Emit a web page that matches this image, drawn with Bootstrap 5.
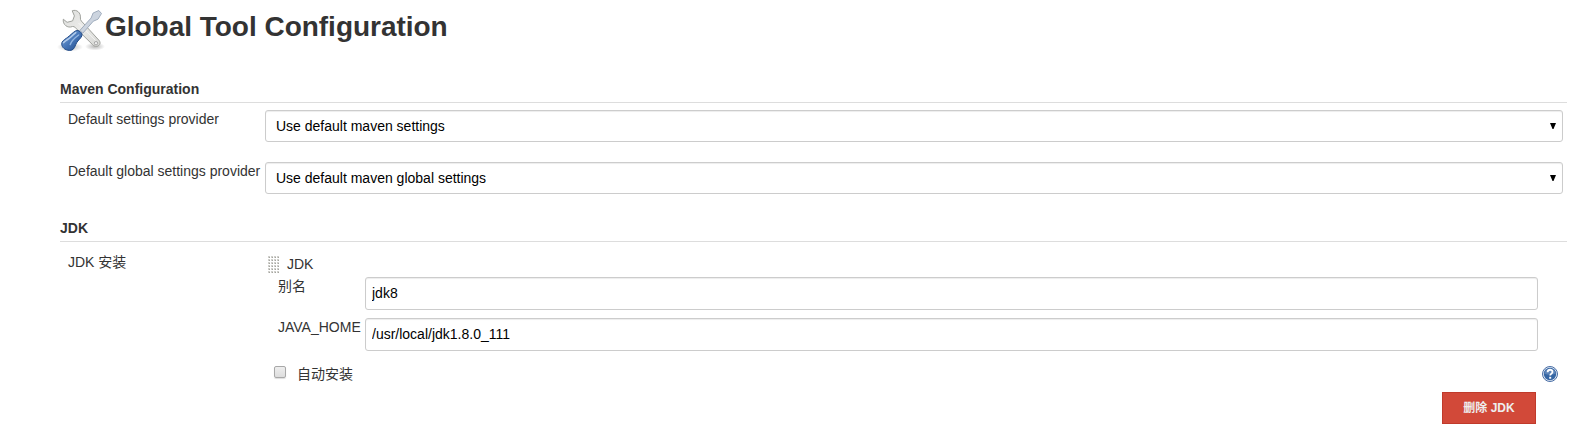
<!DOCTYPE html>
<html lang="zh-CN">
<head>
<meta charset="utf-8">
<meta name="viewport" content="width=device-width, initial-scale=1">
<title>Global Tool Configuration</title>
<link href="https://cdn.jsdelivr.net/npm/bootstrap@5.3.0/dist/css/bootstrap.min.css" rel="stylesheet">
<style>
body{font-family:"Liberation Sans","Noto Sans CJK SC",sans-serif;font-size:14px;line-height:20px;color:#333;background:#fff;overflow:hidden}
.page{padding:6px 7px 0 57px}
.title-row{height:73px}
h1{font-size:28px;line-height:42px;font-weight:700;color:#333;letter-spacing:-.02px}
.section-head{font-size:14px;line-height:20px;font-weight:700;height:24px;margin:0 0 0 3px;border-bottom:1px solid #ddd}
.field-row{margin-left:3px;padding:7px 4px 0 8px}
.field-label{width:197px;flex:none;line-height:18px;height:20px;white-space:nowrap}
.form-control,.form-select{height:32px;font-size:14px;line-height:20px;color:#000;border:1px solid #ccc;border-radius:3px;box-shadow:inset 0 1px 1px rgba(0,0,0,.075)}
.form-select{padding:0 30px 0 10px;background:#fff url("data:image/svg+xml,%3Csvg xmlns='http://www.w3.org/2000/svg' viewBox='0 0 6 6'%3E%3Cpath d='M0 0h6L3.5 6h-1z'/%3E%3C/svg%3E") no-repeat right 6px top 12px/6px 6px}
.form-control{height:33px;padding:0 6px 1px}
.maven-gap{margin-top:13px}
.jdk-section{padding-top:24px}
.jdk-row{padding-top:11px}
.tool-head{height:24px;padding:3px 0 0 3px}
.tool-name{margin:-2px 0 0 7px}
.tool-label{width:87px;flex:none;height:20px;line-height:18px;white-space:nowrap}
.tool{padding:0 25px 0 13px}
.install-row{padding:13px 5px 0 9px}
.form-check-input[type=checkbox]{width:12px;height:12px;margin:2px 0 0;border:1px solid #a8a8a8;border-radius:2px;background:linear-gradient(#eee,#ddd);box-shadow:0 1px 1px #ddd}
.auto-label{margin-left:11px}
.help-icon{margin-top:2px}
.delete-row{padding:8px 27px 0 0}
.btn-delete{width:94px;height:32px;padding:0;font-size:12px;line-height:18px;font-weight:700;color:#eee;background:#d24939;border:1px solid #c03a2b;border-radius:0}
</style>
</head>
<body>
<main class="page">
  <header class="title-row d-flex align-items-start">
    <svg width="48" height="48" viewBox="0 0 48 48" aria-hidden="true">
      <defs>
        <linearGradient id="steel" x1="0" y1="0" x2="1" y2="1"><stop offset="0" stop-color="#dcdddb"/><stop offset=".5" stop-color="#ebebe9"/><stop offset="1" stop-color="#d6d7d4"/></linearGradient>
        <linearGradient id="handle" x1="0" y1="0" x2="1" y2="1"><stop offset="0" stop-color="#8fb2de"/><stop offset=".5" stop-color="#4676b8"/><stop offset="1" stop-color="#234a88"/></linearGradient>
        <radialGradient id="shade"><stop offset="0" stop-color="#000" stop-opacity=".28"/><stop offset="1" stop-color="#000" stop-opacity="0"/></radialGradient>
      </defs>
      <ellipse cx="13" cy="41" rx="13" ry="4.500" fill="url(#shade)"/>
      <ellipse cx="38" cy="40.500" rx="10" ry="4" fill="url(#shade)"/>
      <path d="M15.200 4.800C19.700 3 24 6.800 23.400 12c-.1 1.200.2 2.200 1 3.100L42 34.300c2.600 3.100.1 6.500-3.500 6.100-1.300-.2-2.300-1-3.200-2L18.200 21.500c-.7-.8-1.600-1.100-2.700-1C10.500 22.600 5.500 18.500 6.300 13.200L10.100 16.300l5.500-1.400 1.800-5z" fill="url(#steel)" stroke="#a0a29d" stroke-linejoin="round"/>
      <path d="M21.500 17 38.500 34.500" stroke="#fff" stroke-opacity=".6"/>
      <circle cx="39" cy="37.200" r="1.700" fill="#eee" stroke="#999" stroke-width=".8"/>
      <path d="m22.800 24.500 11.300-12.500 2-5 5.700-2.500 2.700 3-3.500 5.700-4.700 2-10.500 12z" fill="#ccd4df" stroke="#98a6b8" stroke-width=".9" stroke-linejoin="round"/>
      <path d="M18.800 24.800c2.400-1.500 7.200 2.200 6 5.200-1.100 2.600-3.800 4.200-5.200 6.800-1.100 2-1.600 4.300-3.400 6.400-1.500 1.600-5.500 1.700-8.300-.1-3-1.900-3.800-5-2.800-6.900 1.400-2.500 3.600-3.300 5.700-5 2.700-2.100 5.100-4.800 8-6.400z" fill="url(#handle)" stroke="#204a87"/>
      <path d="M18.800 26.600c-3.200 2.300-5 4.800-7.600 6.600-1.600 1.100-3.500 1.800-4.600 3.400" fill="none" stroke="#b4cdec" stroke-width="1.500" stroke-linecap="round"/>
      <path d="M21.700 29c-3.500 2.500-7 5-8.500 9.500" fill="none" stroke="#91b4e0" stroke-width="1.500" stroke-linecap="round"/>
    </svg>
    <h1 class="mb-0">Global Tool Configuration</h1>
  </header>

  <section>
    <h2 class="section-head">Maven Configuration</h2>
    <div class="field-row d-flex">
      <label class="field-label" for="settings">Default settings provider</label>
      <select class="form-select" id="settings"><option>Use default maven settings</option></select>
    </div>
    <div class="field-row maven-gap d-flex">
      <label class="field-label" for="globalSettings">Default global settings provider</label>
      <select class="form-select" id="globalSettings"><option>Use default maven global settings</option></select>
    </div>
  </section>

  <section class="jdk-section">
    <h2 class="section-head">JDK</h2>
    <div class="field-row jdk-row d-flex">
      <div class="field-label">JDK 安装</div>
      <div class="flex-grow-1">
        <div class="tool-head d-flex">
          <svg width="12" height="18" viewBox="0 0 12 18" shape-rendering="crispEdges" aria-hidden="true">
            <defs><pattern id="dots" width="3" height="3" patternUnits="userSpaceOnUse"><path d="M0 0h2v2H0z" fill="#d0d0cc"/><path d="M1 1h1v1H1z" fill="#a4a49f"/></pattern></defs>
            <path d="M0 0h12v18H0z" fill="url(#dots)"/>
          </svg>
          <span class="tool-name">JDK</span>
        </div>
        <div class="tool d-flex">
          <label class="tool-label" for="alias">别名</label>
          <input class="form-control" id="alias" value="jdk8">
        </div>
        <div class="tool d-flex mt-2">
          <label class="tool-label" for="home">JAVA_HOME</label>
          <input class="form-control" id="home" value="/usr/local/jdk1.8.0_111">
        </div>
        <div class="install-row d-flex">
          <input class="form-check-input flex-shrink-0" type="checkbox" id="auto">
          <label class="auto-label" for="auto">自动安装</label>
          <svg class="help-icon ms-auto" width="16" height="16" viewBox="0 0 16 16" role="img" aria-label="Help">
            <circle cx="8" cy="8" r="7.500" fill="#e4ebf4" stroke="#486da5"/>
            <circle cx="8" cy="8" r="6.200" fill="#3465a4"/>
            <path d="M2.200 7.500a5.900 5.900 0 0 1 11.600 0Q8 10 2.200 7.500z" fill="#5d84b8"/>
            <path d="M5.600 6.200C5.600 3 10.500 3 10.500 5.900 10.500 7.600 8.200 7.600 8.200 9.500" fill="none" stroke="#fff" stroke-width="1.800"/>
            <path d="M7.200 10.800h2v1.900h-2z" fill="#fff"/>
          </svg>
        </div>
        <div class="delete-row d-flex justify-content-end">
          <button class="btn btn-delete" type="button">删除 JDK</button>
        </div>
      </div>
    </div>
  </section>
</main>
<script src="https://cdn.jsdelivr.net/npm/bootstrap@5.3.0/dist/js/bootstrap.bundle.min.js"></script>
</body>
</html>
